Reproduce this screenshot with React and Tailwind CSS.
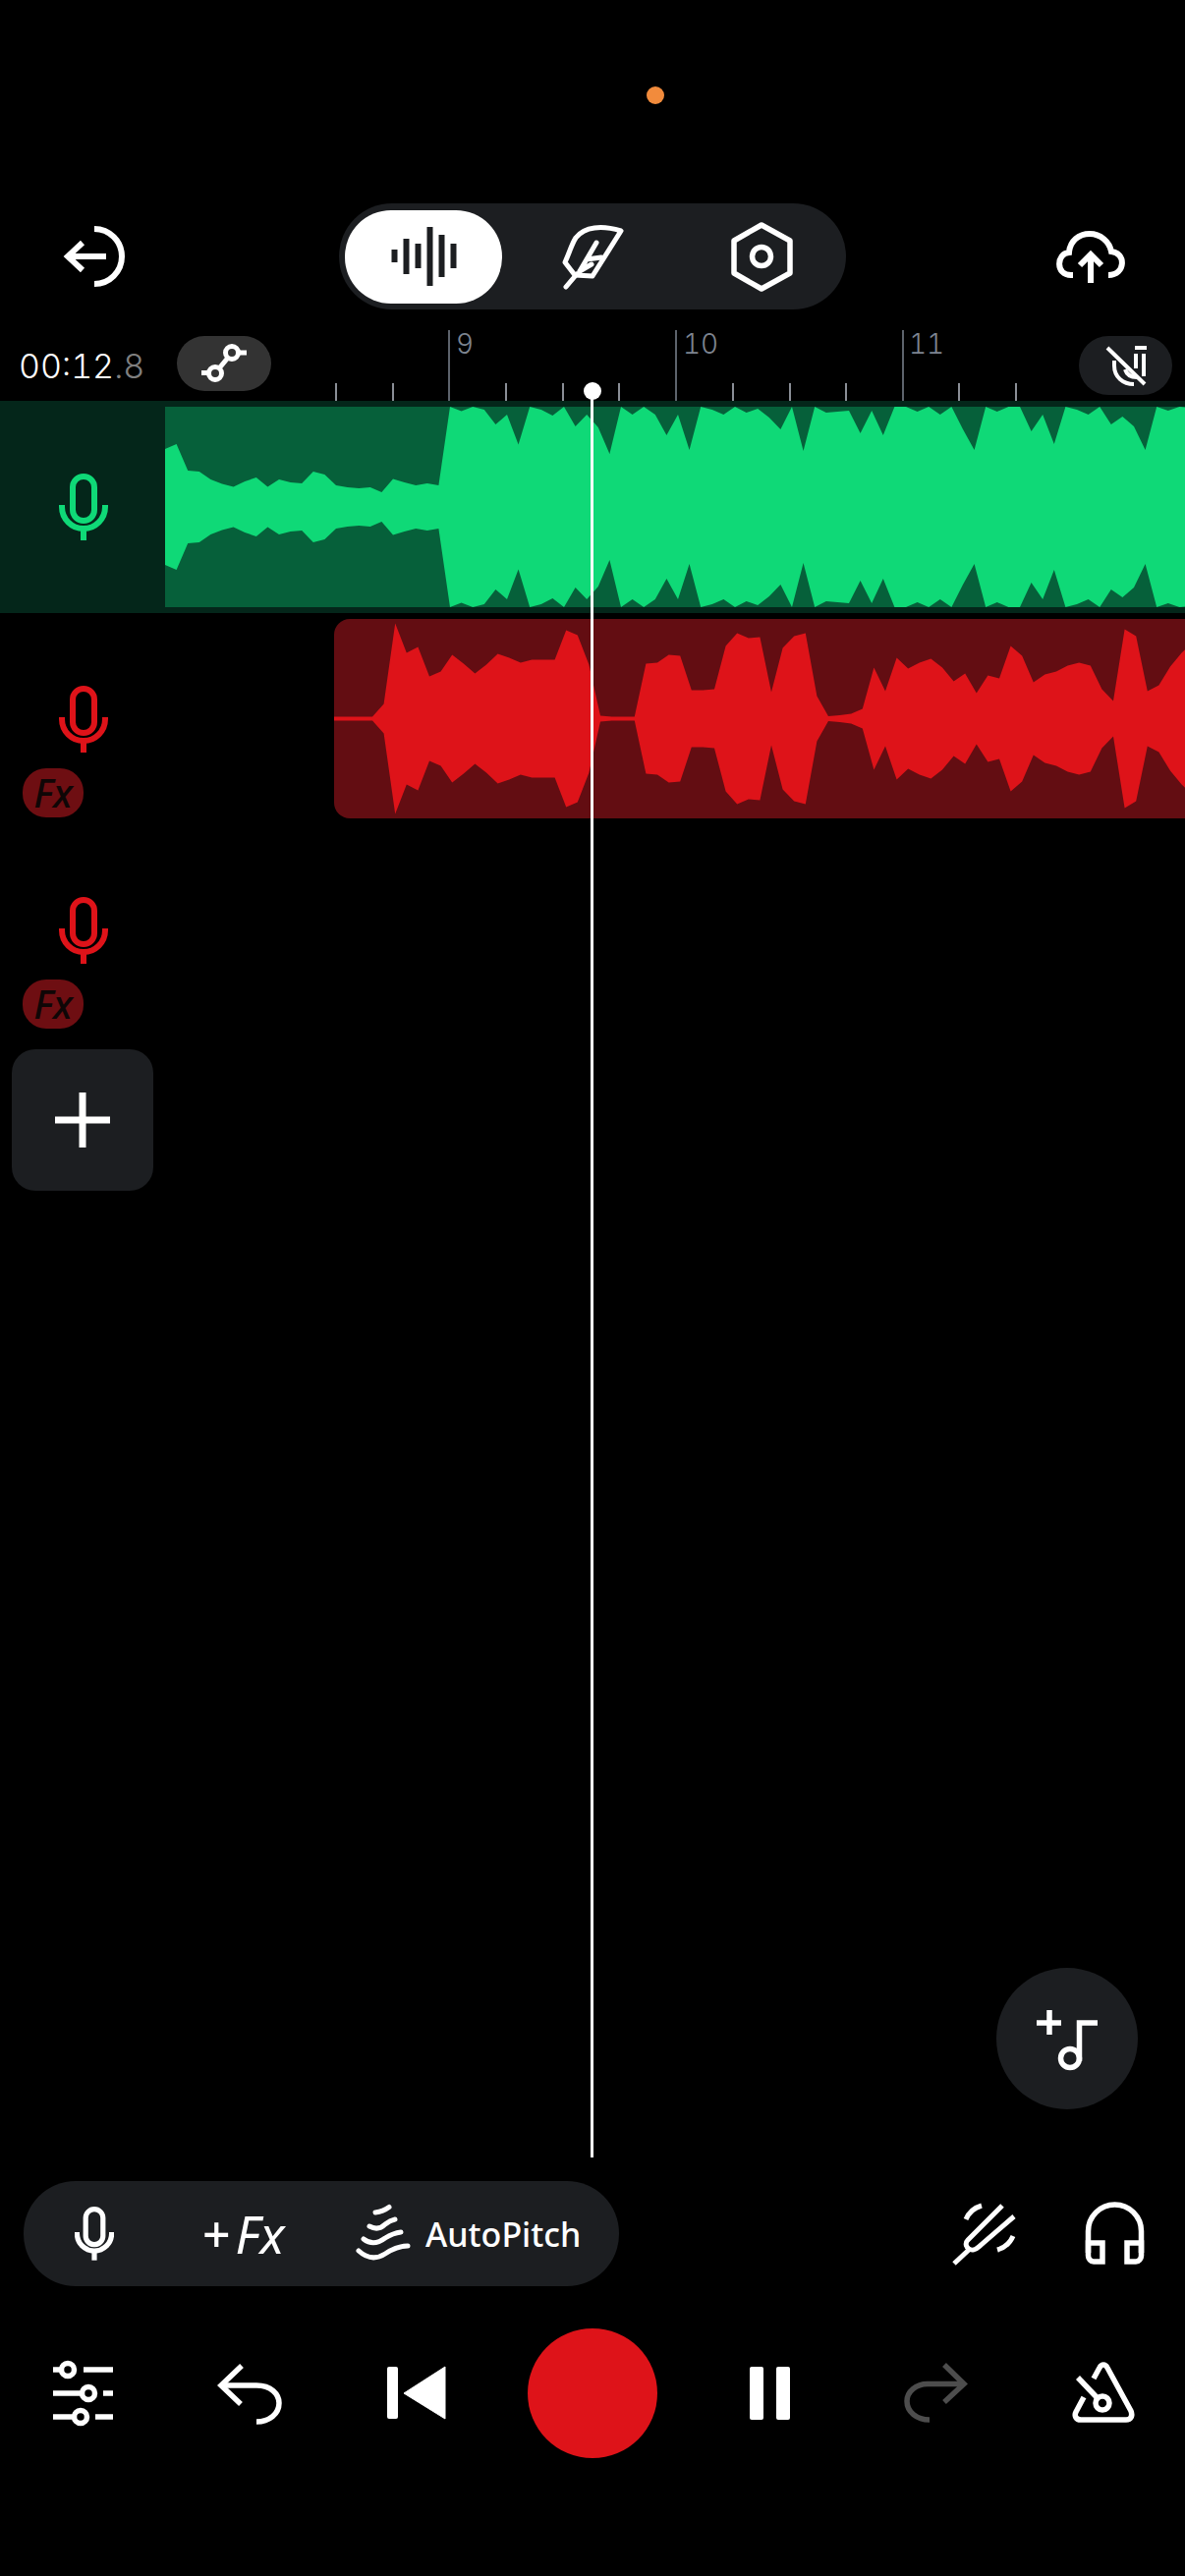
import React from 'react';

// half-heights of the waveform, one value every 11.6px
const GREEN_AMPS = [
  64, 37, 36, 28, 23.5, 20.5, 26, 30, 20.5, 28, 25, 24, 36, 33, 22, 20, 19, 20, 15, 28.5, 25, 22, 24, 22,
  102, 97.5, 102, 99, 84, 94, 63.5, 102, 99, 93, 102, 82, 94, 81, 54, 102, 94, 102, 94, 73, 94, 58, 102, 99,
  94, 102, 96, 100, 91, 79, 102, 57, 102, 96, 97, 98, 75, 98, 73, 102, 102, 97, 102, 94, 102, 79, 58, 102,
  97, 102, 102, 77, 94, 64, 102, 99, 94, 102, 84, 92, 82, 58, 102, 98, 102, 101,
];

const RED_AMPS = [
  2, 15, 97, 67, 73, 43, 48, 65, 56, 46, 55, 66, 62, 57, 60, 60, 60, 90, 85, 55, 3, 2, 2, 2, 56, 57, 65, 64,
  29, 29, 30, 74, 87, 82, 83, 27, 72, 84, 87, 23, 2.5, 3.5, 5, 10, 52, 28, 62, 51, 57, 61, 52, 38, 46, 26, 44,
  41, 74, 64, 37, 45, 48, 54, 57, 54, 30, 18, 91, 84, 28, 34, 53, 67, 78,
];

const MINOR_TICKS = [342, 400, 515, 573, 630, 746, 804, 861, 976, 1034];
const MAJOR_TICKS = [457, 688, 919];

function Waveform({ amps, startX, leadAmp, width, height, color }) {
  const mid = height / 2;
  const xs = amps.map((_, i) => startX + i * 11.6);
  const top = xs.map((x, i) => `${x},${mid - amps[i]}`);
  const bottom = xs.map((x, i) => `${x},${mid + amps[i]}`).reverse();
  const points = [`0,${mid - leadAmp}`, ...top, ...bottom, `0,${mid + leadAmp}`].join(' ');
  return (
    <svg width={width} height={height} viewBox={`0 0 ${width} ${height}`} className="block">
      <polygon points={points} fill={color} />
    </svg>
  );
}

function Icon({ box, className = '', color = '#fff', sw = 5, children }) {
  const [, , w, h] = box.split(' ');
  return (
    <svg
      width={w}
      height={h}
      viewBox={box}
      fill="none"
      stroke={color}
      strokeWidth={sw}
      className={`block shrink-0 ${className}`}
    >
      {children}
    </svg>
  );
}

function Mic({ color, className = '', width = 50, height = 68, sw = 6 }) {
  return (
    <svg width={width} height={height} viewBox="0 0 50 68" fill="none" stroke={color} strokeWidth={sw} className={`block shrink-0 ${className}`}>
      <rect x="14" y="3" width="22" height="45" rx="11" />
      <path d="M3 32 V34 A22 22 0 0 0 47 34 V32" />
      <path d="M25 56 V68" />
    </svg>
  );
}

function FxBadge() {
  return (
    <div className="ml-[23px] mt-[16px] flex h-[50px] w-[62px] items-center justify-center rounded-[24px] bg-[#6e0e12]">
      <span className="text-[40px] font-medium italic leading-none text-[#0f0606] [font-family:'Noto_Sans',sans-serif]">Fx</span>
    </div>
  );
}

export default function App() {
  return (
    <div className="relative flex h-[2622px] w-[1206px] flex-col overflow-hidden bg-black text-white [font-family:'Inter',sans-serif]">
      {/* status bar dot */}
      <div className="h-[207px] shrink-0 pl-[658px] pt-[88px]">
        <div className="h-[18px] w-[18px] rounded-full bg-[#f28b3c]" />
      </div>

      {/* top bar */}
      <div className="flex h-[108px] shrink-0 items-center pl-[60px]">
        <Icon box="60 225 70 70" sw={6}>
          <path d="M108 260 H69 M84 246 L69 260 L84 274" />
          <path d="M96 232 A28 28 0 0 1 96 288" />
        </Icon>
        <div className="ml-[215px] flex h-[108px] w-[516px] items-center rounded-[54px] bg-[#1c1e21] px-[6px]">
          <div className="flex h-[95px] w-[160px] items-center justify-center rounded-[47px] bg-white">
            <Icon box="395 226 72 70" color="#1c1e21" sw={6}>
              <path d="M401.5 254 V267 M413.5 243 V279 M425.5 248 V273 M437.5 231 V291 M449.5 239 V282 M461.5 248 V273" />
            </Icon>
          </div>
          <div className="flex w-[184px] items-center justify-center">
            <Icon box="568 222 70 70" sw={5}>
              <path d="M632 231 C622 228 612 227 605 228 C597 229 590 233 586 238 C582 244 580 252 575 263 L585 276 L603 277 Z" strokeLinejoin="round" />
              <path d="M576 288 L587 275 M590 272 L607 243 M597 260 L612 258 M590 272 L602 265" strokeLinecap="round" />
            </Icon>
          </div>
          <div className="flex w-[160px] items-center justify-center">
            <Icon box="740 220 70 80" sw={5.5}>
              <path d="M775 228 L804 244 V277 L775 293 L747 277 V244 Z" strokeLinejoin="round" />
              <circle cx="775" cy="260" r="9.5" />
            </Icon>
          </div>
        </div>
        <Icon box="1070 228 80 60" className="ml-[209px]" sw={6}>
          <path d="M1092 277 H1090 C1074 277 1075 255 1088 254 C1089 242 1098 235 1109 235 C1120 235 1129 243 1131 253 C1146 254 1146 277 1128 277" />
          <path d="M1110 285 V256 M1099 267 L1110 256 L1121 267" />
        </Icon>
      </div>

      {/* ruler */}
      <div className="relative flex h-[93px] shrink-0 items-start pl-[19px] pt-[27px]">
        <svg width="1206" height="93" viewBox="0 315 1206 93" className="absolute left-0 top-0">
          {MINOR_TICKS.map((x) => (
            <path key={x} d={`M${x} 390 V408`} stroke="#8a8e96" strokeWidth="2" />
          ))}
          {MAJOR_TICKS.map((x) => (
            <path key={x} d={`M${x} 336 V408`} stroke="#7d8490" strokeWidth="1.5" />
          ))}
        </svg>
        <span className="absolute left-[464px] top-[19px] text-[28px] font-light leading-[32px] tabular-nums text-[#7d8490]">9</span>
        <span className="absolute left-[695px] top-[19px] text-[28px] font-light leading-[32px] tabular-nums text-[#7d8490]">10</span>
        <span className="absolute left-[925px] top-[19px] text-[28px] font-light leading-[32px] tabular-nums text-[#7d8490]">11</span>

        <div className="relative w-[161px] pt-[11px] text-[34px] font-light leading-[40px] tabular-nums">
          00:12<span className="text-[#7f7f7f]">.8</span>
        </div>
        <div className="relative flex h-[56px] w-[96px] items-center justify-center rounded-[28px] bg-[#333333]">
          <Icon box="200 350 58 44" sw={5}>
            <circle cx="220" cy="382" r="6.5" />
            <circle cx="237" cy="361" r="6.5" />
            <path d="M224 377 L233 366 M206 381.5 H213.5 M244 361 H252" />
          </Icon>
        </div>
        <div className="relative ml-auto mr-[13px] flex h-[60px] w-[95px] items-center justify-center rounded-[30px] bg-[#1c1e21]">
          <Icon box="1120 350 48 44" sw={4}>
            <path d="M1125 354 L1163 391 M1153 354 H1165" />
            <path d="M1132 367 V372 C1132 384 1141 391 1152 391" />
            <path d="M1143 376 C1145 382 1149 384 1155 384" />
            <path d="M1162 383 V360 M1154 375 V360" />
          </Icon>
        </div>
      </div>

      {/* track 1 */}
      <div className="flex h-[216px] shrink-0 bg-[#04261a] py-[6px]">
        <div className="w-[168px] shrink-0 pt-[68px]">
          <Mic color="#0fd977" className="ml-[60px]" />
        </div>
        <div className="h-[204px] flex-1 overflow-hidden bg-[#06603a]">
          <Waveform amps={[59, ...GREEN_AMPS]} startX={0} leadAmp={59} width={1038} height={204} color="#0fd977" />
        </div>
      </div>

      {/* track 2 */}
      <div className="flex h-[215px] shrink-0 py-[6px]">
        <div className="flex w-[168px] shrink-0 flex-col pt-[68px]">
          <Mic color="#de1319" className="ml-[60px]" />
          <FxBadge />
        </div>
        <div className="ml-[172px] h-[203px] flex-1 overflow-hidden rounded-l-[16px] bg-[#630d12]">
          <Waveform amps={RED_AMPS} startX={39} leadAmp={2} width={866} height={203} color="#de1319" />
        </div>
      </div>

      {/* track 3 */}
      <div className="flex h-[215px] shrink-0 py-[6px]">
        <div className="flex w-[168px] shrink-0 flex-col pt-[68px]">
          <Mic color="#de1319" className="ml-[60px]" />
          <FxBadge />
        </div>
      </div>

      {/* add track */}
      <div className="ml-[12px] mt-[14px] flex h-[144px] w-[144px] shrink-0 items-center justify-center rounded-[24px] bg-[#1c1e21]">
        <Icon box="52 1107 64 64" sw={7}>
          <path d="M84 1111 V1167 M56 1139 H112" />
        </Icon>
      </div>

      {/* add music */}
      <div className="mr-[48px] mt-[791px] flex h-[144px] w-[144px] shrink-0 items-center justify-center self-end rounded-full bg-[#1c1e21]">
        <Icon box="1050 2040 72 66" sw={5.5}>
          <path d="M1055 2057 H1080 M1068 2044 V2069" />
          <circle cx="1089" cy="2093" r="9.5" />
          <path d="M1098.5 2096 V2057 H1117" />
        </Icon>
      </div>

      {/* tools row */}
      <div className="mt-[73px] flex h-[107px] shrink-0 items-center pl-[24px]">
        <div className="flex h-[107px] w-[606px] items-center rounded-[53px] bg-[#1c1e21]">
          <Mic color="#fff" width={40} height={55} sw={6.5} className="ml-[52px]" />
          <div className="ml-[90px] flex w-[87px] items-center [font-family:'Noto_Sans',sans-serif]">
            <span className="text-[50px] font-medium leading-none">+</span>
            <span className="ml-[5px] text-[52px] italic leading-none">Fx</span>
          </div>
          <Icon box="360 2243 60 64" className="ml-[67px]" sw={5}>
            <path d="M382 2253 Q390 2252 396 2247.5" strokeLinecap="round" />
            <path d="M376 2267 Q385 2272 392 2265 Q397 2261 402 2260" strokeLinecap="round" />
            <path d="M370 2280 Q380 2288 392 2279 Q400 2274 408 2273" strokeLinecap="round" />
            <path d="M365 2292 Q378 2304 392 2295 Q404 2287 415 2287" strokeLinecap="round" />
          </Icon>
          <span className="ml-[13px] text-[34px] font-medium leading-none [font-family:'Noto_Sans',sans-serif]">AutoPitch</span>
        </div>
        <Icon box="966 2240 70 70" className="ml-[336px]" sw={5}>
          <path d="M971 2305 L986 2291" />
          <path d="M1020 2246 L985 2281 C982 2284 983 2288 986 2290 C989 2292 993 2291 996 2288 L1032 2257" />
          <path d="M983 2260 C986 2253 992 2248 999 2246 M1015 2291 C1022 2289 1028 2284 1031 2277" />
        </Icon>
        <Icon box="1100 2238 70 70" className="ml-[64px]" sw={5.5}>
          <path d="M1107.5 2292 V2270 A27 27 0 0 1 1161.5 2270 V2292" />
          <path d="M1107.5 2282 H1122 V2301 H1113 C1110 2301 1107.5 2298 1107.5 2295 Z" />
          <path d="M1161.5 2282 H1147 V2301 H1156 C1159 2301 1161.5 2298 1161.5 2295 Z" />
        </Icon>
      </div>

      {/* transport */}
      <div className="mt-[43px] flex h-[132px] shrink-0 items-center pl-[50px]">
        <Icon box="50 2400 70 70" sw={5.5}>
          <path d="M54 2411 H61 M85 2411 H115 M54 2435 H82 M105 2435 H115 M54 2459 H74 M97 2459 H115" />
          <circle cx="69" cy="2411" r="6.5" />
          <circle cx="90" cy="2435" r="6.5" />
          <circle cx="82" cy="2459" r="6.5" />
        </Icon>
        <Icon box="218 2400 72 70" className="ml-[98px]" sw={5.5}>
          <path d="M246 2407 L225 2427 L245 2446" />
          <path d="M225 2427 H261 C276 2427 284 2436 284 2445 C284 2456 274 2464 261 2464" />
        </Icon>
        <svg width="64" height="60" viewBox="392 2406 64 60" className="ml-[102px] block shrink-0">
          <rect x="394" y="2409" width="11" height="53" rx="2" fill="#fff" />
          <path d="M453 2409 V2462 L411 2436 Z" fill="#fff" stroke="#fff" strokeWidth="1" strokeLinejoin="round" />
        </svg>
        <div className="ml-[81px] h-[132px] w-[132px] shrink-0 rounded-full bg-[#de1319]" />
        <div className="ml-[94px] flex shrink-0 gap-[13px]">
          <div className="h-[54px] w-[14px] rounded-[2px] bg-white" />
          <div className="h-[54px] w-[14px] rounded-[2px] bg-white" />
        </div>
        <Icon box="918 2404 68 66" className="ml-[114px]" color="#4d4d4d" sw={5.5}>
          <path d="M961 2408 L981 2427.5 L961 2446" />
          <path d="M981 2427.5 H945 C932 2427 923 2436 923 2445 C923 2456 933 2464 946 2464" />
        </Icon>
        <Icon box="1088 2404 70 66" className="ml-[102px]" sw={5.5}>
          <path d="M1113 2422 L1119 2411 C1121 2407 1125 2407 1127 2411 L1151 2455 C1153 2460 1151 2464 1146 2464 H1100 C1095 2464 1093 2460 1095 2456 L1103 2441" strokeLinejoin="round" />
          <path d="M1097 2421 L1116 2441" />
          <circle cx="1122" cy="2447" r="7" />
        </Icon>
      </div>

      {/* playhead */}
      <div className="absolute left-[601px] top-[398px] h-[1798px] w-[3px] bg-white" />
      <div className="absolute left-[594px] top-[389px] h-[18px] w-[18px] rounded-full bg-white" />
    </div>
  );
}
